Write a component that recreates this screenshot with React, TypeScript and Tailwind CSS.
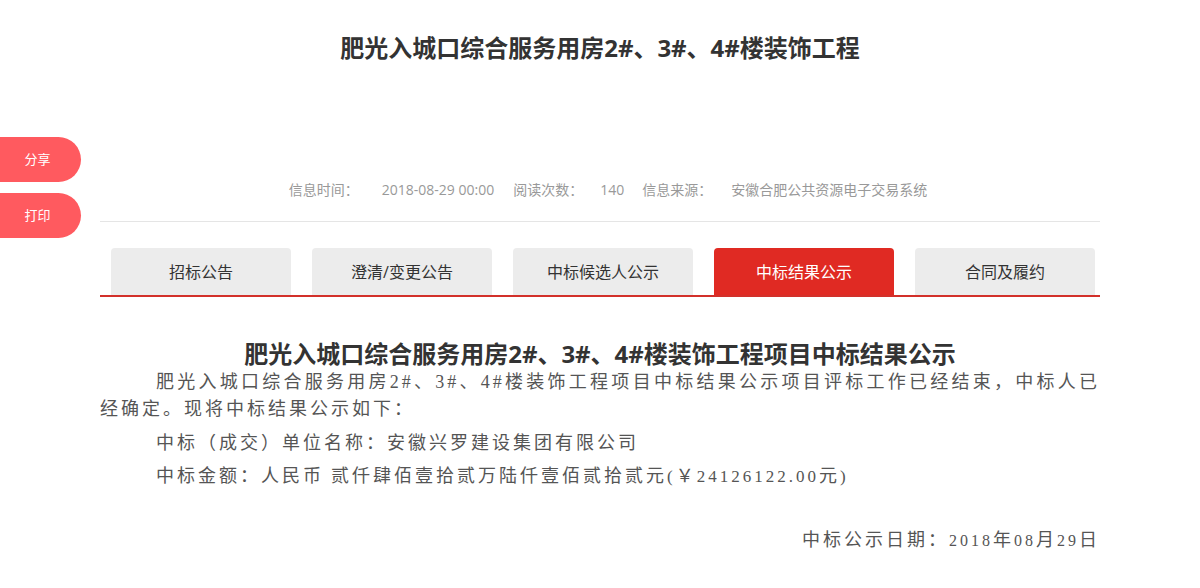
import React from "react";

const tabs = ["招标公告", "澄清/变更公告", "中标候选人公示", "中标结果公示", "合同及履约"];

const sans = "font-['Open_Sans','Noto_Sans_CJK_SC',sans-serif]";
const serif = "font-['Liberation_Serif','Noto_Sans_CJK_SC',serif]";

// latin runs in the body are a touch smaller than the CJK text
function N({ children, big }: { children: React.ReactNode; big?: boolean }) {
  return <span className={big ? "text-[17px] leading-none" : "text-[16px] leading-none"}>{children}</span>;
}

export default function App() {
  return (
    <div className="relative min-h-[588px] bg-white text-[#333]">
      {/* floating side buttons */}
      <div className="absolute left-0 top-[137px] flex flex-col gap-[11px]">
        <button className={`${sans} h-[45px] w-[81px] rounded-r-full bg-[#ff5a5f] pr-[6px] text-[13px] text-white`}>分享</button>
        <button className={`${sans} h-[45px] w-[81px] rounded-r-full bg-[#ff5a5f] pr-[6px] text-[13px] text-white`}>打印</button>
      </div>

      <div className="mx-auto w-[1000px]">
        <h1 className={`${sans} pt-[32px] text-center text-[24px] font-bold leading-[32px] text-[#333]`}>
          肥光入城口综合服务用房2#、3#、4#楼装饰工程
        </h1>

        <div className={`${sans} mt-[117px] flex justify-center pl-[16px] text-[14px] leading-[18px] text-[#999]`}>
          <span>信息时间：</span>
          <span className="ml-[23px]">2018-08-29 00:00</span>
          <span className="ml-[19px]">阅读次数：</span>
          <span className="ml-[17px]">140</span>
          <span className="ml-[18px]">信息来源：</span>
          <span className="ml-[19px]">安徽合肥公共资源电子交易系统</span>
        </div>

        <div className="mt-[22px] h-px bg-[#e5e5e5]" />

        <div className="mt-[26px] flex gap-[21px] border-b-2 border-[#d2302a] pl-[11px]">
          {tabs.map((t) => {
            const active = t === "中标结果公示";
            return (
              <div
                key={t}
                className={`${sans} flex h-[47px] w-[180px] items-center justify-center rounded-t-[4px] text-[16px] ${
                  active ? "bg-[#e02a23] text-white" : "bg-[#ececec] text-[#333]"
                }`}
              >
                {t}
              </div>
            );
          })}
        </div>

        <h2 className={`${sans} mt-[42px] text-center text-[24px] font-bold leading-[30px] text-[#333]`}>
          肥光入城口综合服务用房2#、3#、4#楼装饰工程项目中标结果公示
        </h2>

        <div className={`${serif} text-[18px] tracking-[3px] text-[#555]`}>
          <p className="text-justify indent-[56px] leading-[27px]">
            肥光入城口综合服务用房2#、3#、4#楼装饰工程项目中标结果公示项目评标工作已经结束，中标人已经确定。现将中标结果公示如下：
          </p>
          <p className="mt-[5px] pl-[56px] leading-[30px]">中标（成交）单位名称：安徽兴罗建设集团有限公司</p>
          <p className="mt-[3px] pl-[56px] leading-[30px]">
            中标金额：人民币<N> </N>贰仟肆佰壹拾贰万陆仟壹佰贰拾贰元<N big>(</N>￥<N big>24126122.00</N>元<N big>)</N>
          </p>
          <p className="mt-[34px] text-right leading-[30px]">
            中标公示日期：<N>2018</N>年<N>08</N>月<N>29</N>日
          </p>
        </div>
      </div>
    </div>
  );
}
